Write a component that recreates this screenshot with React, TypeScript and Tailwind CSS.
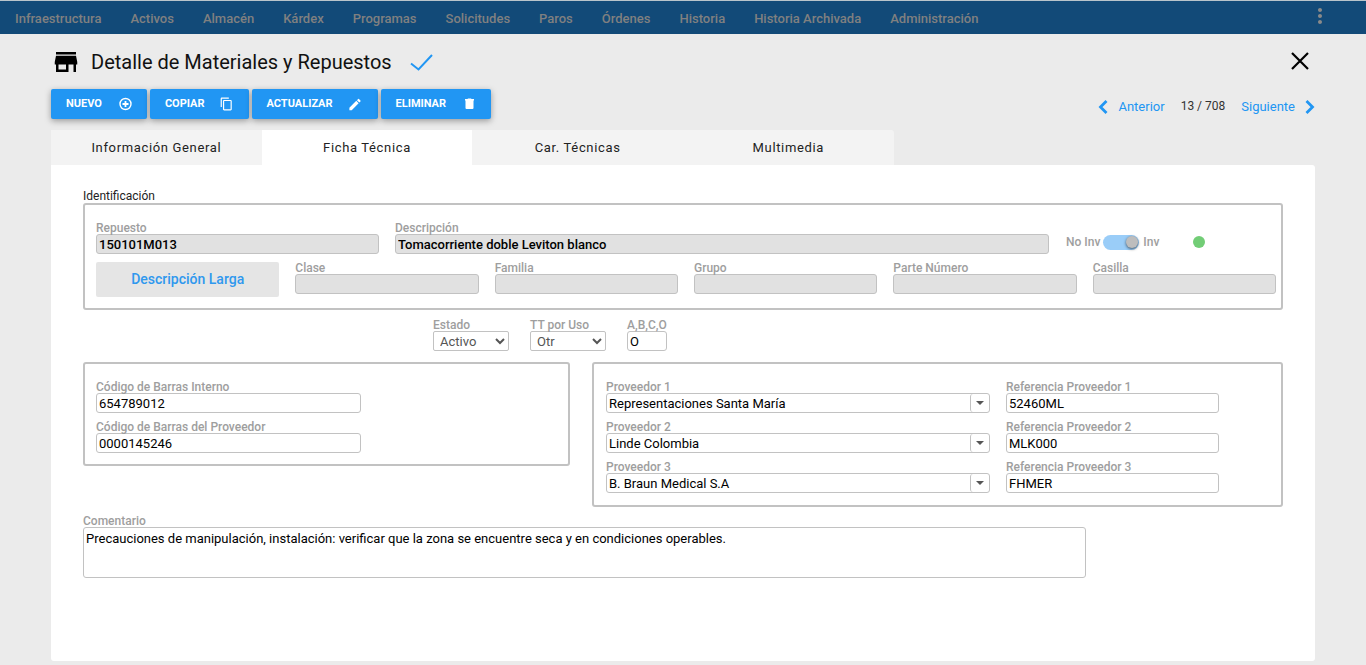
import React, { useState } from "react";
import { MdStore, MdContentCopy, MdEdit, MdMoreVert } from "react-icons/md";

const menu = [
  "Infraestructura",
  "Activos",
  "Almacén",
  "Kárdex",
  "Programas",
  "Solicitudes",
  "Paros",
  "Órdenes",
  "Historia",
  "Historia Archivada",
  "Administración",
];

const tabs = ["Información General", "Ficha Técnica", "Car. Técnicas", "Multimedia"];

const suppliers = [
  { name: "Representaciones Santa María", ref: "52460ML" },
  { name: "Linde Colombia", ref: "MLK000" },
  { name: "B. Braun Medical S.A", ref: "FHMER" },
];

const labelClass = "block text-xs leading-3 font-medium text-[#9e9e9e] whitespace-nowrap";
const inputClass = "block w-full h-5 rounded-[3px] border border-[#c2c2c2] px-0.5 text-[13px] text-black";

function PlusIcon() {
  return (
    <svg viewBox="0 0 16 16" className="w-4 h-4" fill="none" stroke="currentColor">
      <circle cx="9.500" cy="8" r="5.500" strokeWidth="1.400" />
      <path d="M9.500 5v6M6.500 8h6" strokeWidth="1.800" />
    </svg>
  );
}

function TrashIcon() {
  return (
    <svg viewBox="0 0 16 16" className="w-4 h-4" fill="currentColor">
      <path d="M5 3h2.500l.5-.5h3l.5.5H14v1.500H5zM5.500 4.500h8V12a1 1 0 0 1-1 1h-6a1 1 0 0 1-1-1z" />
    </svg>
  );
}

function Field({ id, label, value = "", locked = false }: { id: string; label: string; value?: string; locked?: boolean }) {
  return (
    <div>
      <label htmlFor={id} className={labelClass}>{label}</label>
      <input
        id={id}
        type="text"
        defaultValue={value}
        readOnly={locked}
        className={locked ? `${inputClass} bg-[#e1e1e1] font-medium` : `${inputClass} bg-white`}
      />
    </div>
  );
}

function ComboField({ id, label, value }: { id: string; label: string; value: string }) {
  return (
    <div>
      <label htmlFor={id} className={labelClass}>{label}</label>
      <div className="flex h-5 rounded-[3px] border border-[#c2c2c2] bg-white">
        <input id={id} type="text" defaultValue={value} className="flex-1 min-w-0 px-0.5 pt-px text-[13px] text-black" />
        <button type="button" aria-label={`Abrir ${label}`} className="w-[19px] flex items-center justify-center rounded-l-[3px] border-l border-[#c2c2c2]">
          <svg viewBox="0 0 8 4" className="w-2 h-1" fill="#555">
            <path d="M0 0h8L4 4z" />
          </svg>
        </button>
      </div>
    </div>
  );
}

function SelectField({ id, label, value }: { id: string; label: string; value: string }) {
  return (
    <div>
      <label htmlFor={id} className={labelClass}>{label}</label>
      <select id={id} defaultValue={value} className="block w-19 h-5 rounded-[2px] border border-[#c2c2c2] bg-white pl-0.5 text-[13px] text-[#555]">
        <option>{value}</option>
      </select>
    </div>
  );
}

function ActionButton({ text, children }: { text: string; children: React.ReactNode }) {
  return (
    <button
      type="button"
      className="flex items-center gap-3.5 h-[30px] px-[15px] rounded-[2px] bg-[#2196f3] text-[11px] font-bold text-white shadow-[0_2px_6px_rgba(0,0,0,0.35)]"
    >
      {text}
      {children}
    </button>
  );
}

export default function App() {
  const [tab, setTab] = useState("Ficha Técnica");
  const [inventory, setInventory] = useState(true);

  return (
    <div className="min-h-screen flex flex-col bg-[#ebebeb] font-[Roboto,sans-serif] text-black">
      {/* Top menu */}
      <header className="flex items-center justify-between h-[34px] border-t border-[#b9c4cb] bg-[#124a78] pl-[15px] pr-[34px]">
        <nav className="flex gap-[29px] pt-0.5 text-[13px] font-medium text-[#808080]">
          {menu.map((item) => (
            <a key={item} href="#" className="whitespace-nowrap">{item}</a>
          ))}
        </nav>
        <button type="button" aria-label="Más opciones" className="pb-1 text-[#8a8a8a]">
          <MdMoreVert className="w-6 h-6" />
        </button>
      </header>

      <main className="flex-1 flex flex-col px-[51px] pb-1">
        {/* Title */}
        <div className="flex items-center justify-between h-[55px] pr-1.5">
          <div className="flex items-center">
            <MdStore className="w-[30px] h-[30px]" />
            <h1 className="ml-2.5 text-xl text-[#111]">Detalle de Materiales y Repuestos</h1>
            <svg viewBox="0 0 24 18" className="ml-[18px] w-6 h-[18px]" fill="none" stroke="#2196f3" strokeWidth="2">
              <path d="M1 10.500l7.500 6L22 2" />
            </svg>
          </div>
          <button type="button" aria-label="Cerrar" className="pb-0.5">
            <svg viewBox="0 0 18 18" className="w-[18px] h-[18px]" fill="none" stroke="#000" strokeWidth="2.200">
              <path d="M1 1l16 16M17 1L1 17" />
            </svg>
          </button>
        </div>

        <div className="flex items-start justify-between h-[41px]">
          <div className="flex gap-[3px]">
            <ActionButton text="NUEVO"><PlusIcon /></ActionButton>
            <ActionButton text="COPIAR"><MdContentCopy className="w-[15px] h-3.5" /></ActionButton>
            <ActionButton text="ACTUALIZAR"><MdEdit className="w-4 h-[15px]" /></ActionButton>
            <ActionButton text="ELIMINAR"><TrashIcon /></ActionButton>
          </div>
          <div className="flex items-center pt-2 text-[13px] text-[#2196f3]">
            <button type="button" className="flex items-center gap-2.5">
              <svg viewBox="0 0 10 14" className="w-2.5 h-3.5" fill="none" stroke="currentColor" strokeWidth="2.800">
                <path d="M8.500 1L2.500 7l6 6" />
              </svg>
              Anterior
            </button>
            <span className="mx-4 pb-0.5 text-xs text-[#333]">13 / 708</span>
            <button type="button" className="flex items-center gap-2.5">
              Siguiente
              <svg viewBox="0 0 10 14" className="w-2.5 h-3.5" fill="none" stroke="currentColor" strokeWidth="2.800">
                <path d="M1.500 1l6 6-6 6" />
              </svg>
            </button>
          </div>
        </div>

        {/* Tabs */}
        <div role="tablist" className="flex">
          {tabs.map((name) => (
            <button
              key={name}
              type="button"
              role="tab"
              aria-selected={tab === name}
              onClick={() => setTab(name)}
              className={`w-1/6 h-[35px] text-[13px] tracking-wider text-[#222] last:rounded-tr-[3px] ${tab === name ? "bg-white" : "bg-[#f3f3f3]"}`}
            >
              {name}
            </button>
          ))}
        </div>

        <form className="flex-1 px-8 pt-6 pb-8 bg-white rounded-b-[3px] rounded-tr-[3px]">
          <h2 className="text-xs leading-[14px] text-[#222]">Identificación</h2>
          <div className="flex flex-col gap-2 border-2 border-[#c2c2c2] rounded-[3px] pt-[17px] pb-[11px] pl-[11px] pr-[5px]">
            <div className="grid grid-cols-[283fr_654fr_211fr] gap-4">
              <Field id="repuesto" label="Repuesto" value="150101M013" locked />
              <Field id="descripcion" label="Descripción" value="Tomacorriente doble Leviton blanco" locked />
              <div className="flex items-center pt-2 pl-px text-xs font-medium text-[#9e9e9e]">
                <span className="mr-[3px]">No Inv</span>
                <label className="relative block w-9 h-[15px]">
                  <input
                    type="checkbox"
                    aria-label="Inv"
                    checked={inventory}
                    onChange={(e) => setInventory(e.target.checked)}
                    className="peer appearance-none block w-9 h-[15px] rounded-full bg-gray-300 checked:bg-[#9acdf8]"
                  />
                  <span className="absolute top-px left-0.5 peer-checked:left-[23px] w-3 h-3 rounded-full bg-[#bdbdbd] shadow-[0_1px_3px_rgba(0,0,0,0.6)] pointer-events-none" />
                </label>
                <span className="ml-1">Inv</span>
                <span className="ml-[34px] w-3 h-3 rounded-full bg-[#72cd76]" />
              </div>
            </div>
            <div className="grid grid-cols-6 gap-4">
              <button type="button" className="h-[35px] pb-0.5 rounded-[2px] bg-[#e5e5e5] text-sm font-medium text-[#2f98ee]">
                Descripción Larga
              </button>
              <Field id="clase" label="Clase" locked />
              <Field id="familia" label="Familia" locked />
              <Field id="grupo" label="Grupo" locked />
              <Field id="parte" label="Parte Número" locked />
              <Field id="casilla" label="Casilla" locked />
            </div>
          </div>

          <div className="flex gap-[21px] mt-[9px] pl-[350px]">
            <SelectField id="estado" label="Estado" value="Activo" />
            <SelectField id="uso" label="TT por Uso" value="Otr" />
            <div className="w-10">
              <Field id="abco" label="A,B,C,O" value="O" />
            </div>
          </div>

          <div className="grid grid-cols-[487fr_691fr] items-start gap-[22px] mt-[11px]">
            <div className="border-2 border-[#c2c2c2] rounded-[3px] pt-[17px] pb-[11px] pl-[11px]">
              <div className="flex flex-col gap-2 w-[265px]">
                <Field id="barras-interno" label="Código de Barras Interno" value="654789012" />
                <Field id="barras-proveedor" label="Código de Barras del Proveedor" value="0000145246" />
              </div>
            </div>
            <div className="flex flex-col gap-2 border-2 border-[#c2c2c2] rounded-[3px] pt-[17px] pb-3 pl-3 pr-[62px]">
              {suppliers.map((s, i) => (
                <div key={s.ref} className="grid grid-cols-[384fr_213fr] gap-4">
                  <ComboField id={`proveedor-${i + 1}`} label={`Proveedor ${i + 1}`} value={s.name} />
                  <Field id={`referencia-${i + 1}`} label={`Referencia Proveedor ${i + 1}`} value={s.ref} />
                </div>
              ))}
            </div>
          </div>

          <div className="mt-2">
            <label htmlFor="comentario" className={labelClass}>Comentario</label>
            <textarea
              id="comentario"
              defaultValue="Precauciones de manipulación, instalación: verificar que la zona se encuentre seca y en condiciones operables."
              className="block w-[1003px] max-w-full h-[51px] resize-none rounded-[3px] border border-[#c2c2c2] px-0.5 pt-[3px] text-[13px] leading-4"
            />
          </div>
        </form>
      </main>
    </div>
  );
}
